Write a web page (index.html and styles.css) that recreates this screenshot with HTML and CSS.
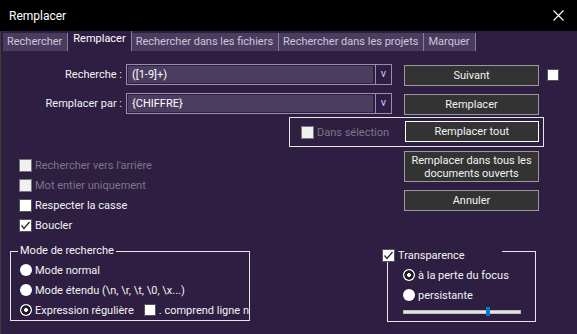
FILE: index.html
```html
<!DOCTYPE html>
<html lang="fr">
<head>
    <meta charset="UTF-8">
    <title>Remplacer</title>
    <link rel="stylesheet" href="styles.css">
</head>
<body>
<div class="window">

    <div class="titlebar">
        <span class="title">Remplacer</span>
        <svg class="close" width="11" height="11" viewBox="0 0 11 11">
            <path d="M0.5 0.5 L10.5 10.5 M10.5 0.5 L0.5 10.5" stroke="#fff" stroke-width="1.1" fill="none"/>
        </svg>
    </div>

    <div class="tabs">
        <div class="tab">Rechercher</div>
        <div class="tab active">Remplacer</div>
        <div class="tab">Rechercher dans les fichiers</div>
        <div class="tab">Rechercher dans les projets</div>
        <div class="tab">Marquer</div>
    </div>

    <div class="content">

        <div class="row">
            <span class="lbl">Recherche :</span>
            <div class="combo">
                <div class="combo-text">([1-9]+)</div>
                <div class="combo-btn">v</div>
            </div>
            <button class="btn">Suivant</button>
            <span class="box side"></span>
        </div>

        <div class="row second">
            <span class="lbl">Remplacer par :</span>
            <div class="combo">
                <div class="combo-text">{CHIFFRE}</div>
                <div class="combo-btn">v</div>
            </div>
            <button class="btn">Remplacer</button>
        </div>

        <div class="frame">
            <div class="check disabled sel">
                <span class="box"></span>Dans sélection
            </div>
            <button class="btn default">Remplacer tout</button>
        </div>

        <div class="middle">
            <div class="options">
                <div class="check disabled"><span class="box"></span>Rechercher vers l'arrière</div>
                <div class="check disabled"><span class="box"></span>Mot entier uniquement</div>
                <div class="check"><span class="box"></span>Respecter la casse</div>
                <div class="check">
                    <span class="box">
                        <svg width="11" height="11" viewBox="0 0 11 11"><path d="M1.5 5.5 L4 8.5 L9.5 2" stroke="#222" stroke-width="1.2" fill="none"/></svg>
                    </span>Boucler
                </div>
            </div>
            <div class="actions">
                <button class="btn tall">Remplacer dans tous les<br>documents ouverts</button>
                <button class="btn">Annuler</button>
            </div>
        </div>

        <div class="bottom">
            <fieldset class="mode">
                <legend>Mode de recherche</legend>
                <div class="choice"><span class="radio"></span>Mode normal</div>
                <div class="choice"><span class="radio"></span>Mode étendu (\n, \r, \t, \0, \x...)</div>
                <div class="choice last">
                    <span class="radio on"></span>Expression régulière
                    <span class="box inline"></span>. comprend ligne nouvelle
                </div>
            </fieldset>

            <div class="transp">
                <div class="transp-head">
                    <span class="box">
                        <svg width="11" height="11" viewBox="0 0 11 11"><path d="M1.5 5.5 L4 8.5 L9.5 2" stroke="#222" stroke-width="1.2" fill="none"/></svg>
                    </span>Transparence
                </div>
                <div class="choice"><span class="radio on"></span>à la perte du focus</div>
                <div class="choice"><span class="radio"></span>persistante</div>
                <div class="slider"><span class="thumb"></span></div>
            </div>
        </div>

    </div>
</div>
</body>
</html>
```

FILE: styles.css
```css
* { box-sizing: border-box; }

body {
    margin: 0;
    background-color: #2e1f42;
    font-family: Roboto, "Noto Sans", sans-serif;
    font-size: 11px;
    color: #f2f2f2;
}

.window {
    width: 577px;
    height: 334px;
    overflow: hidden;
    background-color: #2e1f42;
    box-shadow: inset 1px 0 0 #3d3d3d;
}

.titlebar {
    height: 31px;
    background-color: #000;
    display: flex;
    align-items: center;
    justify-content: space-between;
    padding: 0 13px 0 9px;
    font-size: 12px;
    color: #fff;
}

.tabs {
    height: 21px;
    display: flex;
    align-items: flex-end;
    padding-left: 3px;
}
.tab {
    height: 18px;
    margin-bottom: 1px;
    line-height: 18px;
    padding: 0 5px 0 4px;
    background-color: #4a3c5f;
    color: #cdc5d8;
    border-right: 1px solid #8b7e9c;
    white-space: nowrap;
}
.tab.active {
    height: 20px;
    line-height: 16px;
    background-color: #2e1f42;
    color: #fff;
    padding: 0 5px;
}

.content { padding-top: 12px; }

.row {
    display: flex;
    align-items: center;
    height: 21px;
}
.row.second { margin-top: 8px; }

.lbl {
    width: 122px;
    text-align: right;
    margin-right: 4px;
}

.combo {
    width: 266px;
    height: 21px;
    display: flex;
    border: 1px solid #9b8cae;
}
.combo-text {
    flex: 1;
    margin: 1px 2px 1px 1px;
    padding-left: 4px;
    line-height: 17px;
    background-color: #4b3d60;
    color: #fff;
}
.combo-btn {
    width: 16px;
    border-left: 1px solid #9b8cae;
    text-align: center;
    line-height: 18px;
    color: #cfc4ff;
}

.btn {
    width: 135px;
    height: 21px;
    margin: 1px 0 0 12px;
    padding: 0;
    background-color: #333;
    border: 1px solid #9a9a9a;
    color: #f2f2f2;
    font: inherit;
    line-height: 17px;
}
.btn.default { border-color: #fff; margin: 0; }
.actions .btn { margin: 0; }
.btn.tall { height: 31px; line-height: 13px; }

.box {
    display: inline-block;
    width: 13px;
    height: 13px;
    background-color: #fff;
    border: 1px solid #555;
    flex: none;
    margin-right: 3px;
}
.box svg { display: block; }
.box.side { margin: 1px 0 0 8px; width: 12px; height: 12px; }

.frame {
    margin: 3px 0 0 289px;
    width: 255px;
    height: 30px;
    border: 1px solid #e6e6e6;
    display: flex;
    align-items: flex-start;
    padding: 3px 4px 0 11px;
}
.check {
    display: flex;
    align-items: center;
    height: 20px;
}
.check.disabled { color: #7d7585; }
.check.disabled .box { background-color: #f0f0f0; border-color: #777; }
.check.sel { width: 104px; height: 17px; margin-top: 3px; }

.middle {
    display: flex;
    margin-top: 4px;
}
.options {
    width: 404px;
    padding: 4px 0 0 19px;
}
.actions {
    display: flex;
    flex-direction: column;
    gap: 8px;
}

.bottom {
    display: flex;
    align-items: flex-start;
    margin-top: 8px;
}

.mode {
    margin: 0 0 0 10px;
    width: 240px;
    min-width: 0;
    height: 78px;
    padding: 1px 0 0 9px;
    border: 1px solid #e6e6e6;
    overflow: hidden;
}
.mode legend {
    padding: 0 2px;
    margin-left: -2px;
    line-height: 16px;
}

.choice {
    display: flex;
    align-items: center;
    height: 20px;
    white-space: nowrap;
}
.radio {
    width: 12px;
    height: 12px;
    border-radius: 50%;
    background-color: #fff;
    margin-right: 3px;
    flex: none;
}
.radio.on {
    background: radial-gradient(circle, #fff 0 1.6px, #1e1e1e 2.2px 4.4px, #fff 5px);
}
.box.inline { margin-left: 10px; width: 12px; height: 12px; }

.transp {
    position: relative;
    margin: 8px 0 0 137px;
    width: 149px;
    height: 71px;
    border: 1px solid #e6e6e6;
    padding: 13px 0 0 15px;
}
.transp-head {
    position: absolute;
    left: -6px;
    top: -4px;
    width: 120px;
    height: 14px;
    display: flex;
    align-items: center;
    background-color: #2e1f42;
}

.slider {
    position: relative;
    margin-top: 5px;
    width: 118px;
    height: 4px;
    background-color: #e4e4e4;
    border: 1px solid #bdbdbd;
}
.thumb {
    position: absolute;
    left: 82px;
    top: -4px;
    width: 4px;
    height: 9px;
    background-color: #0078d7;
}
```
